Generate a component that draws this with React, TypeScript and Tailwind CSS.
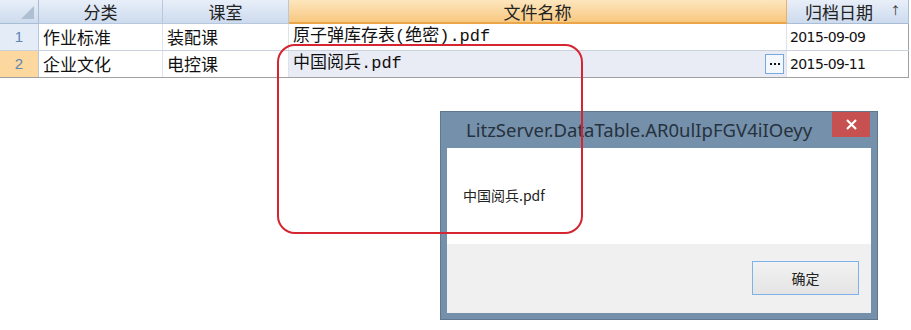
import React from 'react';

const cjk = '"Noto Sans CJK SC", "Noto Sans", sans-serif';
const mono = '"Liberation Mono", "Noto Sans CJK SC", monospace';

const cols = [
  { key: 'cat', title: '分类', w: 'w-[124px]' },
  { key: 'room', title: '课室', w: 'w-[126px]' },
  { key: 'file', title: '文件名称', w: 'w-[498px]' },
  { key: 'date', title: '归档日期', w: 'w-[122px]' },
];

const rows = [
  { n: 1, cat: '作业标准', room: '装配课', file: '原子弹库存表(绝密).pdf', date: '2015-09-09' },
  { n: 2, cat: '企业文化', room: '电控课', file: '中国阅兵.pdf', date: '2015-09-11' },
];

const Grid: React.FC = () => (
  <div className="w-[909px]" style={{ fontFamily: cjk }}>
    {/* header */}
    <div className="flex h-[24px] leading-none">
      <div className="w-[39px] shrink-0 relative bg-linear-to-b from-[#e8eff9] to-[#cddbee] border-r border-b border-[#a9bdd4]">
        <svg className="absolute right-[4px] bottom-[4px]" width="13" height="13" viewBox="0 0 13 13">
          <polygon points="13,0 13,13 0,13" fill="#aebfd4" />
        </svg>
      </div>
      {cols.map((c) =>
        c.key === 'file' ? (
          <div key={c.key} className={`${c.w} shrink-0 flex items-center justify-center text-[17px] text-[#222] bg-linear-to-b from-[#fde6bd] to-[#f8c880] border-r border-[#e8b163] border-b-2 border-b-[#eba64a]`}>
            {c.title}
          </div>
        ) : c.key === 'date' ? (
          <div key={c.key} className={`${c.w} shrink-0 relative flex items-center text-[17px] text-[#222] bg-linear-to-b from-[#e8eff9] to-[#cddbee] border-r border-b border-[#a9bdd4]`}>
            <span className="ml-[18px]">{c.title}</span>
            <span className="absolute right-[7px] top-[5px] text-[11px] text-[#333]">↑</span>
          </div>
        ) : (
          <div key={c.key} className={`${c.w} shrink-0 flex items-center justify-center text-[17px] text-[#222] bg-linear-to-b from-[#e8eff9] to-[#cddbee] border-r border-b border-[#b7c8dc]`}>
            {c.title}
          </div>
        )
      )}
    </div>
    {/* rows */}
    {rows.map((r) => (
      <div key={r.n} className="flex h-[27px] border-b border-[#c9d2dc] last:border-[#a0a0a0]">
        <div className={`w-[39px] shrink-0 flex items-center justify-center text-[15px] text-[#5d86b3] border-r border-[#b7c8dc] ${r.n === 2 ? 'bg-[#fcd89e]' : 'bg-[#e4ecf7]'}`} style={{ fontFamily: '"Liberation Sans", sans-serif' }}>
          {r.n}
        </div>
        <div className="w-[124px] shrink-0 flex items-center pl-[4px] text-[17px] text-[#111] border-r border-[#dde3ea]">{r.cat}</div>
        <div className="w-[126px] shrink-0 flex items-center pl-[4px] text-[17px] text-[#111] border-r border-[#dde3ea]">{r.room}</div>
        <div className={`w-[498px] shrink-0 flex items-center justify-between pl-[4px] pr-[2px] text-[17px] text-[#111] border-r border-[#dde3ea] ${r.n === 2 ? 'bg-[#e9ebf5]' : ''}`} style={{ fontFamily: mono }}>
          <span>{r.file}</span>
          {r.n === 2 && (
            <span className="w-[19px] h-[20px] flex items-center justify-center border border-[#78a8dc] bg-[#f4f7fb]">
              <span className="flex gap-[2px]">
                <span className="w-[2px] h-[2px] bg-[#111]" />
                <span className="w-[2px] h-[2px] bg-[#111]" />
                <span className="w-[2px] h-[2px] bg-[#111]" />
              </span>
            </span>
          )}
        </div>
        <div className="w-[122px] shrink-0 flex items-center pl-[3px] text-[14px] text-[#111] border-r border-[#a0a0a0]" style={{ fontFamily: '"DejaVu Sans", sans-serif', letterSpacing: '-0.6px' }}>
          {r.date}
        </div>
      </div>
    ))}
  </div>
);

const Dialog: React.FC = () => (
  <div className="absolute left-[440px] top-[111px] w-[438px] h-[209px] bg-[#7590aa] border border-[#5f7890] flex flex-col px-[6px] pb-[6px]">
    <div className="h-[36px] relative flex items-center">
      <span className="ml-[19px] text-[18.5px] text-[#26323e]" style={{ fontFamily: '"Noto Sans", sans-serif' }}>
        LitzServer.DataTable.AR0ulIpFGV4iIOeyy
      </span>
      <div className="absolute right-[1px] top-0 w-[38px] h-[25px] bg-[#c75050] flex items-center justify-center">
        <svg width="11" height="11" viewBox="0 0 11 11">
          <path d="M1 1 L10 10 M10 1 L1 10" stroke="#fff" strokeWidth="2.2" />
        </svg>
      </div>
    </div>
    <div className="flex-1 flex flex-col" style={{ fontFamily: cjk }}>
      <div className="h-[96px] bg-white flex items-center pl-[16px] pb-[2px] text-[14px] text-[#222]">中国阅兵.pdf</div>
      <div className="flex-1 bg-[#f0f0f0] flex justify-end items-start pt-[17px] pr-[12px]">
        <button className="w-[107px] h-[34px] border border-[#7db3ea] bg-linear-to-b from-[#f2f2f2] to-[#e4e4e4] text-[14px] text-[#222]">确定</button>
      </div>
    </div>
  </div>
);

export default function App() {
  return (
    <div className="relative w-[911px] h-[330px] bg-white overflow-hidden">
      <Grid />
      <Dialog />
      <div className="absolute left-[277px] top-[44px] w-[306px] h-[190px] rounded-[18px] border-[2.5px] border-[#d42531] pointer-events-none" />
    </div>
  );
}
